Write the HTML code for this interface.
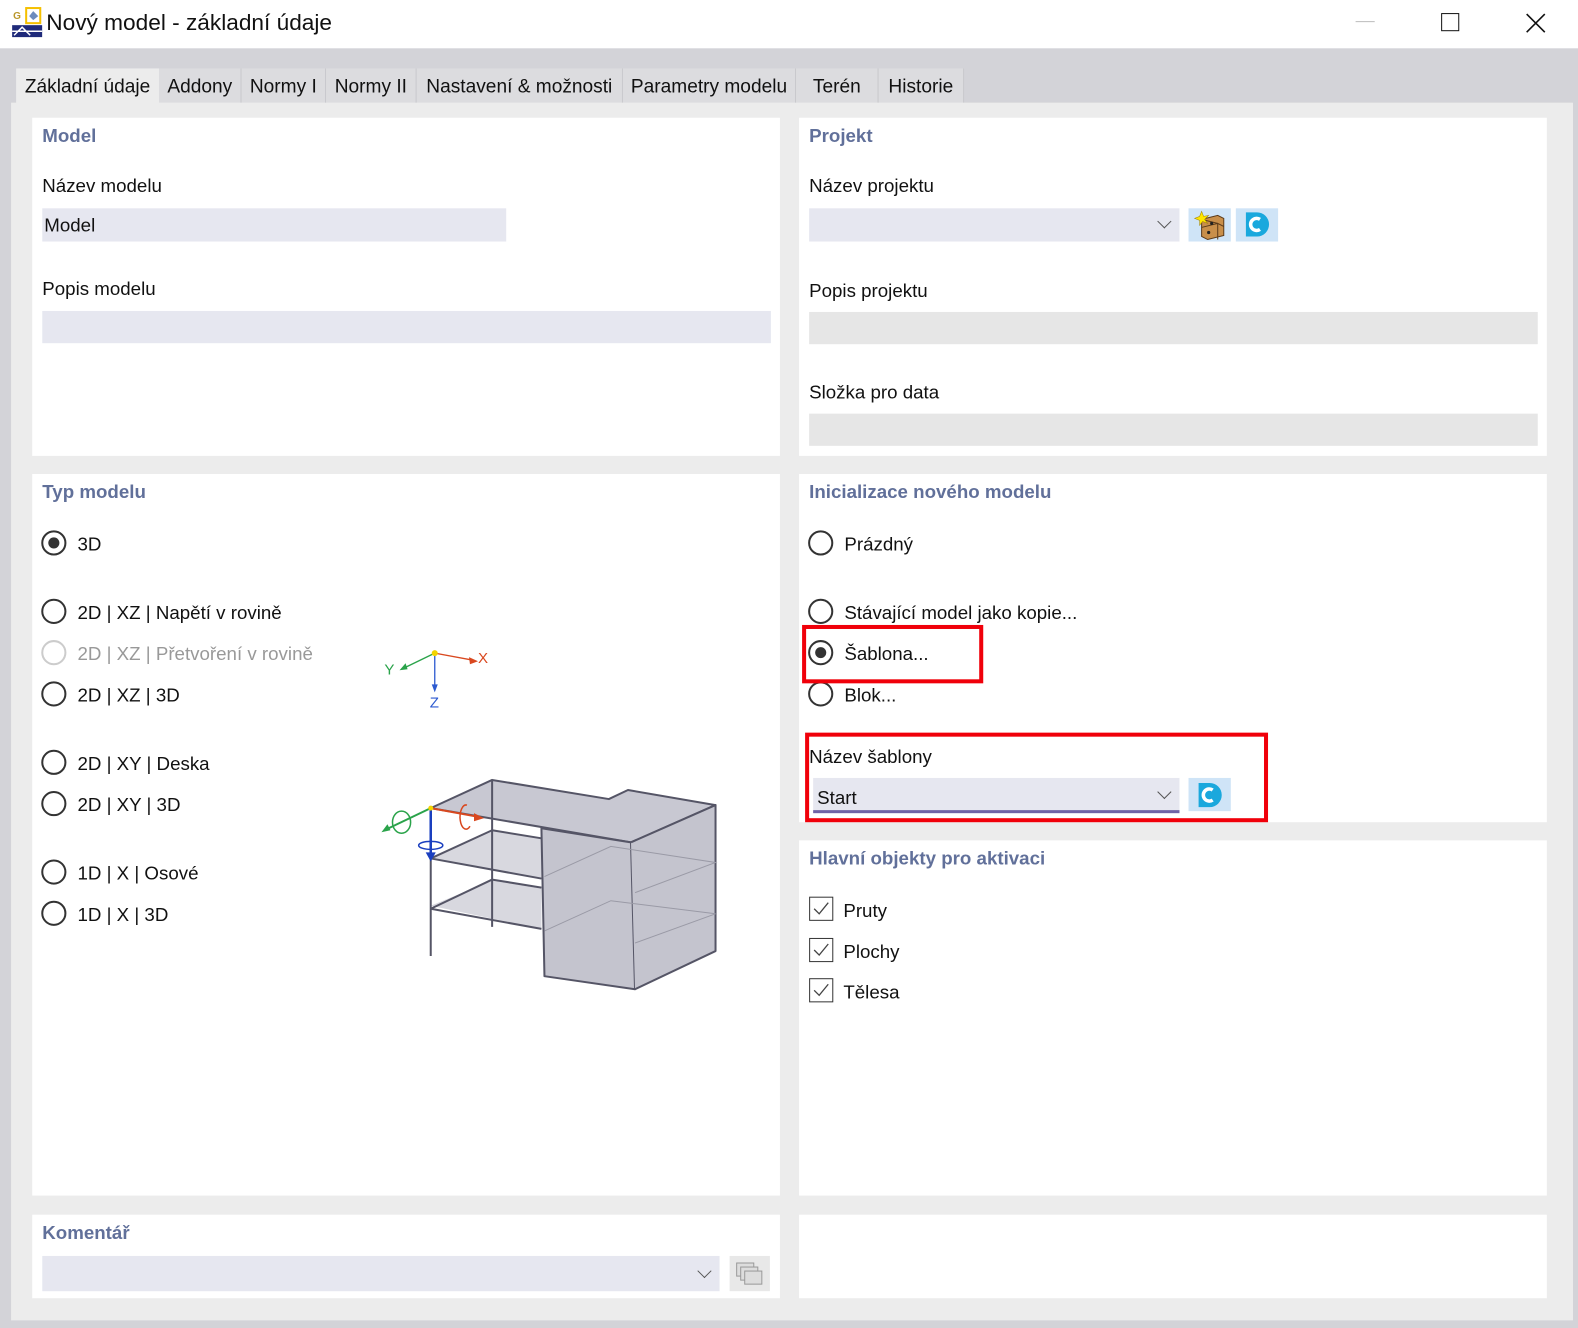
<!DOCTYPE html>
<html><head><meta charset="utf-8">
<style>
*{box-sizing:border-box;margin:0;padding:0}
body{width:1578px;height:1328px;background:#d3d3d8;font-family:"Liberation Sans",sans-serif;position:relative;overflow:hidden;color:#111}
#w{position:absolute;left:0;top:0;width:1568px;height:1320px;transform:scale(1.00638);transform-origin:0 0}
.a{position:absolute}
.t{font-size:18.6px;white-space:nowrap}
.h{font-size:18.6px;font-weight:bold;color:#61709a;white-space:nowrap}
.p{background:#fff}
.in{background:#e6e7f0}
.gr{background:#e6e6e6}
.r{width:25px;height:25px;border:2px solid #333;border-radius:50%}
.r.on::after{content:"";position:absolute;left:5px;top:5px;width:11px;height:11px;border-radius:50%;background:#333}
.r.dis{border-color:#ccc}
.cb{width:24px;height:24px;border:1.5px solid #333}
.tab{position:absolute;top:68px;height:35px;background:#dcdcdf;font-size:19px;line-height:37px;text-align:center;border-right:1px solid #c8c8cc;white-space:nowrap}
.chev{position:absolute;width:10px;height:10px;border-right:1.6px solid #555;border-bottom:1.6px solid #555;transform:rotate(45deg)}
</style></head><body><div id="w">
<div class="a" style="left:0;top:0;width:1578px;height:48px;background:#fff"></div>
<svg class="a" style="left:12px;top:7px" width="30" height="30" viewBox="0 0 30 30">
<rect x="0" y="18" width="30" height="12" fill="#1f2a7a"/>
<path d="M2 28 L10 20 L18 28 M0 24 H30" stroke="#fff" stroke-width="1.5" fill="none"/>
<text x="1" y="12" font-size="10" fill="#b9962a" font-family="Liberation Sans" font-weight="bold">G</text>
<rect x="14" y="1" width="14" height="15" fill="#fff" stroke="#f5c000" stroke-width="2"/>
<path d="M17 9 L21 4 L26 9 L21 13Z" fill="#6d8bbd"/>
</svg>
<div class="a" style="left:46px;top:10px;font-size:22.5px;white-space:nowrap">Nový model - základní údaje</div>
<div class="a" style="left:1347px;top:21px;width:19px;height:1px;background:#bbb"></div>
<div class="a" style="left:1432px;top:13px;width:18px;height:18px;border:1.6px solid #111"></div>
<svg class="a" style="left:1515px;top:12px" width="22" height="22"><path d="M2 2L20 20M20 2L2 20" stroke="#111" stroke-width="1.6"/></svg>

<div class="tab" style="left:16px;width:142px;background:#ececec;border:none">Základní údaje</div>
<div class="tab" style="left:158px;width:82px">Addony</div>
<div class="tab" style="left:240px;width:84px">Normy I</div>
<div class="tab" style="left:324px;width:90px">Normy II</div>
<div class="tab" style="left:414px;width:205px">Nastavení &amp; možnosti</div>
<div class="tab" style="left:619px;width:172px">Parametry modelu</div>
<div class="tab" style="left:791px;width:82px">Terén</div>
<div class="tab" style="left:873px;width:85px">Historie</div>

<div class="a" style="left:11px;top:102px;width:1552px;height:1210px;background:#ececec"></div>

<div class="a p" style="left:32px;top:117px;width:743px;height:336px"></div>
<div class="a p" style="left:794px;top:117px;width:743px;height:336px"></div>
<div class="a p" style="left:32px;top:471px;width:743px;height:717px"></div>
<div class="a p" style="left:794px;top:471px;width:743px;height:346px"></div>
<div class="a p" style="left:794px;top:835px;width:743px;height:353px"></div>
<div class="a p" style="left:32px;top:1207px;width:743px;height:83px"></div>
<div class="a p" style="left:794px;top:1207px;width:743px;height:83px"></div>

<div class="a h" style="left:42px;top:124px">Model</div>
<div class="a t" style="left:42px;top:174px">Název modelu</div>
<div class="a in" style="left:42px;top:207px;width:461px;height:33px"></div>
<div class="a t" style="left:44px;top:213px">Model</div>
<div class="a t" style="left:42px;top:276px">Popis modelu</div>
<div class="a in" style="left:42px;top:309px;width:724px;height:32px"></div>

<div class="a h" style="left:804px;top:124px">Projekt</div>
<div class="a t" style="left:804px;top:174px">Název projektu</div>
<div class="a in" style="left:804px;top:207px;width:368px;height:33px"></div>
<div class="chev" style="left:1152px;top:215px"></div>
<div class="a" style="left:1181px;top:207px;width:42px;height:33px;background:#cfe4f7"></div>
<svg class="a" style="left:1186px;top:208px" width="34" height="32" viewBox="0 0 34 32">
<path d="M8 10 L24 6 L30 9 L30 26 L14 30 L8 27Z" fill="#c98f4a" stroke="#5a3a1a"/>
<path d="M8 18 L24 14 L30 17 M8 10 L24 14 L24 30" stroke="#5a3a1a" fill="none"/>
<circle cx="15" cy="23" r="1.6" fill="#222"/><circle cx="18" cy="14" r="1.6" fill="#222"/>
<path d="M8 2 L10 7 L15 6 L11 10 L14 14 L9 12 L6 16 L6 11 L1 9 L6 7Z" fill="#ffe600" stroke="#a08000" stroke-width=".5"/>
</svg>
<div class="a" style="left:1228px;top:207px;width:42px;height:33px;background:#cfe4f7"></div>
<svg class="a" style="left:1236px;top:210px" width="26" height="26" viewBox="0 0 26 26"><path d="M2 1 H13 A12 12 0 0 1 13 25 H2Z" fill="#1aa8dd"/><path d="M16 8 A6 6 0 1 0 16 18" stroke="#fff" stroke-width="3.5" fill="none"/></svg>
<div class="a t" style="left:804px;top:278px">Popis projektu</div>
<div class="a gr" style="left:804px;top:310px;width:724px;height:32px"></div>
<div class="a t" style="left:804px;top:379px">Složka pro data</div>
<div class="a gr" style="left:804px;top:411px;width:724px;height:32px"></div>

<div class="a h" style="left:42px;top:478px">Typ modelu</div>
<div class="a r on" style="left:41px;top:527px"></div><div class="a t" style="left:77px;top:530px">3D</div>
<div class="a r" style="left:41px;top:595px"></div><div class="a t" style="left:77px;top:598px">2D | XZ | Napětí v rovině</div>
<div class="a r dis" style="left:41px;top:636px"></div><div class="a t" style="left:77px;top:639px;color:#999">2D | XZ | Přetvoření v rovině</div>
<div class="a r" style="left:41px;top:677px"></div><div class="a t" style="left:77px;top:680px">2D | XZ | 3D</div>
<div class="a r" style="left:41px;top:745px"></div><div class="a t" style="left:77px;top:748px">2D | XY | Deska</div>
<div class="a r" style="left:41px;top:786px"></div><div class="a t" style="left:77px;top:789px">2D | XY | 3D</div>
<div class="a r" style="left:41px;top:854px"></div><div class="a t" style="left:77px;top:857px">1D | X | Osové</div>
<div class="a r" style="left:41px;top:895px"></div><div class="a t" style="left:77px;top:898px">1D | X | 3D</div>

<svg class="a" style="left:367px;top:625px" width="360" height="360" viewBox="0 0 360 360">
<g font-family="Liberation Sans" font-size="15">
<line x1="65" y1="24" x2="103" y2="31" stroke="#d9481f" stroke-width="1.3"/><path d="M108 32 L99 28 L100 35Z" fill="#d9481f"/>
<text x="108" y="34" fill="#d9481f">X</text>
<line x1="65" y1="24" x2="34" y2="39" stroke="#2aa34a" stroke-width="1.3"/><path d="M30 41 L36 34 L38 40Z" fill="#2aa34a"/>
<text x="15" y="45" fill="#2aa34a">Y</text>
<line x1="65" y1="24" x2="65" y2="58" stroke="#2c5ad0" stroke-width="1.3"/><path d="M65 63 L62 55 L68 55Z" fill="#2c5ad0"/>
<text x="60" y="78" fill="#2c5ad0">Z</text>
<circle cx="65" cy="24" r="3" fill="#f3d400"/>
</g>
<g stroke="#555566" stroke-width="2" stroke-linejoin="round">
<path d="M61 275 L122 250 L171 258 L171 298Z" fill="#c8c8d2" fill-opacity=".7" stroke-width="0"/>
<path d="M61 228 L122 200 L171 208 L171 248Z" fill="#c8c8d2" fill-opacity=".7" stroke-width="0"/>
<path d="M61 228 L122 200 L171 208 M61 278 L122 249 L171 257" fill="none"/>
<path d="M61 228 L171 248 M61 278 L171 298" fill="none"/>
<path d="M61 178 L122 150 L238 169 L257 160 L344 175 L260 212Z" fill="#c8c8d2"/>
<path d="M61 178 L61 325 M122 150 L122 296" fill="none"/>
<path d="M171 198 L260 212 L264 358 L174 345Z" fill="#c4c4ce"/>
<path d="M260 212 L344 175 L344 320 L264 358" fill="#c4c4ce"/>
</g>
<g stroke="#9a9aa6" stroke-width="1" fill="none">
<path d="M174 246 L240 216 L344 232 L264 262 M174 300 L240 270 L344 283 L264 312"/>
</g>
<line x1="61" y1="178" x2="110" y2="187" stroke="#d9481f" stroke-width="2"/><path d="M114 188 L104 183 L104 191Z" fill="#d9481f"/>
<path d="M97 175 A6 12 0 1 0 100 196" stroke="#d9481f" stroke-width="1.5" fill="none"/>
<line x1="61" y1="178" x2="15" y2="200" stroke="#2aa34a" stroke-width="2"/><path d="M12 202 L18 194 L21 200Z" fill="#2aa34a"/>
<ellipse cx="32" cy="192" rx="9" ry="11" stroke="#2aa34a" stroke-width="1.5" fill="none"/>
<line x1="61" y1="178" x2="61" y2="225" stroke="#1a3fbf" stroke-width="2.5"/><path d="M61 231 L56 222 L66 222Z" fill="#1a3fbf"/>
<ellipse cx="61" cy="215" rx="12" ry="4" stroke="#1a3fbf" stroke-width="1.5" fill="none"/>
<circle cx="61" cy="178" r="2.5" fill="#f3d400"/>
</svg>

<div class="a h" style="left:804px;top:478px">Inicializace nového modelu</div>
<div class="a r" style="left:803px;top:527px"></div><div class="a t" style="left:839px;top:530px">Prázdný</div>
<div class="a r" style="left:803px;top:595px"></div><div class="a t" style="left:839px;top:598px">Stávající model jako kopie...</div>
<div class="a r on" style="left:803px;top:636px"></div><div class="a t" style="left:839px;top:639px">Šablona...</div>
<div class="a r" style="left:803px;top:677px"></div><div class="a t" style="left:839px;top:680px">Blok...</div>
<div class="a" style="left:797px;top:621px;width:180px;height:58px;border:4px solid #f0000a"></div>
<div class="a t" style="left:804px;top:741px">Název šablony</div>
<div class="a in" style="left:808px;top:773px;width:364px;height:35px;border-bottom:3px solid #6f63a6"></div>
<div class="a t" style="left:812px;top:782px">Start</div>
<div class="chev" style="left:1152px;top:782px"></div>
<div class="a" style="left:1181px;top:773px;width:42px;height:33px;background:#cfe4f7"></div>
<svg class="a" style="left:1189px;top:777px" width="26" height="26" viewBox="0 0 26 26"><path d="M2 1 H13 A12 12 0 0 1 13 25 H2Z" fill="#1aa8dd"/><path d="M16 8 A6 6 0 1 0 16 18" stroke="#fff" stroke-width="3.5" fill="none"/></svg>
<div class="a" style="left:800px;top:728px;width:460px;height:89px;border:4px solid #f0000a"></div>

<div class="a h" style="left:804px;top:842px">Hlavní objekty pro aktivaci</div>
<div class="a cb" style="left:804px;top:891px"></div><div class="a t" style="left:838px;top:894px">Pruty</div>
<div class="a cb" style="left:804px;top:932px"></div><div class="a t" style="left:838px;top:935px">Plochy</div>
<div class="a cb" style="left:804px;top:972px"></div><div class="a t" style="left:838px;top:975px">Tělesa</div>
<svg class="a" style="left:804px;top:891px" width="24" height="110"><g stroke="#444" stroke-width="1.3" fill="none"><path d="M5 12 L10 17 L19 6"/><path d="M5 53 L10 58 L19 47"/><path d="M5 93 L10 98 L19 87"/></g></svg>

<div class="a h" style="left:42px;top:1214px">Komentář</div>
<div class="a in" style="left:42px;top:1248px;width:673px;height:35px"></div>
<div class="chev" style="left:695px;top:1258px"></div>
<div class="a" style="left:725px;top:1248px;width:40px;height:35px;background:#e8e8e8"></div>
<svg class="a" style="left:730px;top:1252px" width="30" height="28"><g fill="#ddd" stroke="#999"><rect x="2" y="3" width="17" height="13"/><rect x="6" y="7" width="17" height="13"/><rect x="10" y="11" width="17" height="13"/></g></svg>
</div></body></html>
